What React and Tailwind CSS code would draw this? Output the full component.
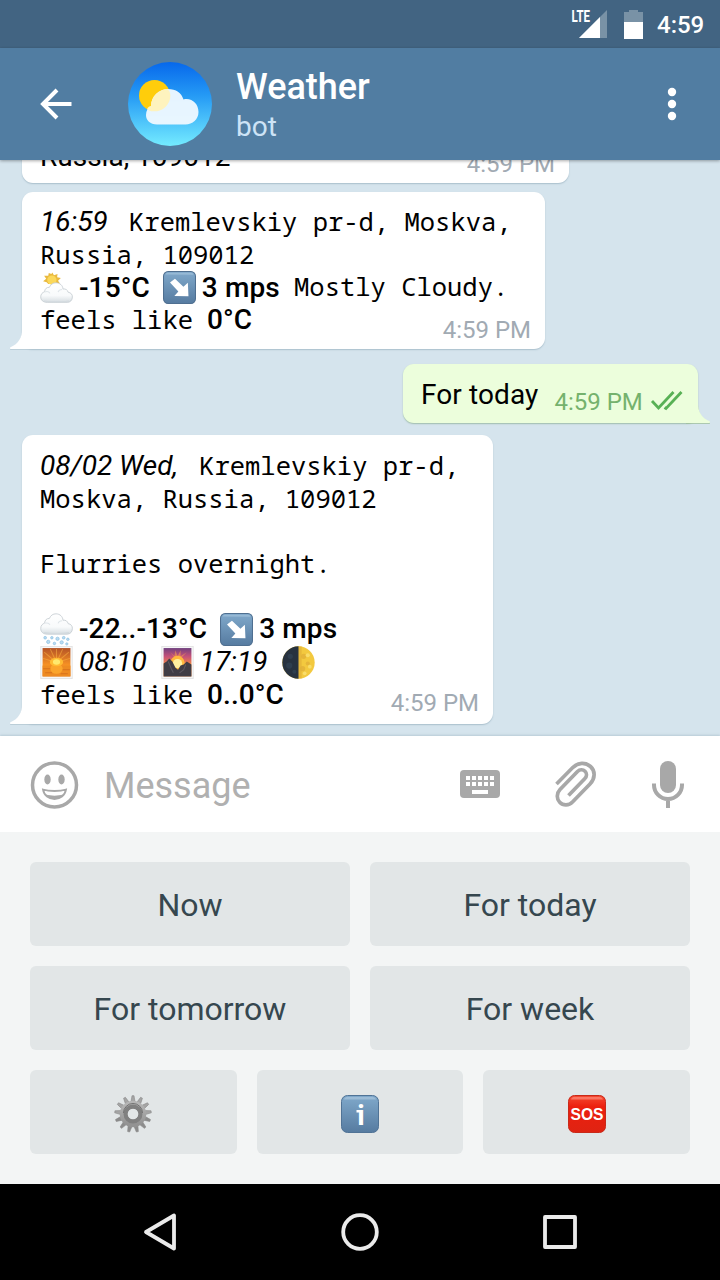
import React from "react";

const Mono = ({ children }) => (
  <span className="font-['Noto_Sans_Mono','DejaVu_Sans_Mono',monospace] text-[25.5px] tracking-[0px]">{children}</span>
);
const Line = ({ children }) => (
  <div className="flex h-[32.6px] items-baseline whitespace-pre leading-[32.6px]">{children}</div>
);
const EmojiLine = ({ children }) => (
  <div className="flex h-[32.6px] items-center whitespace-pre pt-[3px] leading-[32.6px]">{children}</div>
);
const B = ({ children }) => <span className="font-medium tracking-[0.1px]">{children}</span>;

const Emoji = ({ children }) => (
  <svg viewBox="0 0 32 32" className="mr-[6px] h-[33px] w-[33px] shrink-0 self-center">{children}</svg>
);

const Cloud = ({ y = 0 }) => (
  <g transform={`translate(0 ${y})`}>
    <path d="M7 27C2.800 27 .7 24.600.7 21.500c0-2.800 1.700-4.600 3.800-5.200 0-3 2.200-4.700 4.600-4.500 1.200-3 3.500-4.600 6.500-4.500 3.900.1 6.500 2.800 6.700 6.200 2.600-.4 4.500 1 5 3.300 2.700.4 4.200 2.300 4.100 4.800-.1 3.400-2.200 5.400-5 5.400z" fill="url(#cloudFill)" stroke="#c3cbd0" strokeWidth=".8" />
    <path d="M5 16.500c2-.9 4 0 4.600 1.500M21.500 14c-2 0-3.500 1-4 2.600" fill="none" stroke="#dfe5e9" strokeWidth="1" />
    <path d="M4 25.500c6 1.300 18 1.300 24 0" fill="none" stroke="#d3dadf" strokeWidth="1" />
  </g>
);

const SunCloud = () => (
  <Emoji>
    <path d="M12 1.500l1.500 2.500L17 3l-.4 3 3.600.9-2.700 2.500 2 3-3.900.2H8L6.500 11 3 10l3-2.400L4 4.500l4 .2L8.500 2l2.500 1z" fill="#e9b93f" />
    <circle cx="11.500" cy="8.800" r="4.500" fill="#fbd85a" />
    <g transform="translate(0 4) scale(1 .96)"><Cloud y={0.5} /></g>
  </Emoji>
);
const SnowCloud = () => (
  <Emoji>
    <Cloud y={-6.500} />
    <g fill="#b9dcf2" stroke="#8cbfe2" strokeWidth=".7">
      <circle cx="5" cy="24" r="1.300" /><circle cx="11.500" cy="24" r="1.200" /><circle cx="17" cy="25" r="1.600" />
      <circle cx="23" cy="24" r="1.300" /><circle cx="27" cy="25.500" r="1.200" /><circle cx="8" cy="28" r="1.600" />
      <circle cx="14" cy="29.500" r="1.200" /><circle cx="21" cy="28.500" r="1.600" /><circle cx="26" cy="30" r="1.100" />
    </g>
  </Emoji>
);
const ArrowTile = () => (
  <Emoji>
    <rect x=".5" y=".5" width="31" height="31" rx="4.500" fill="url(#blueTile)" stroke="#4f6f90" />
    <path d="M2.500 3.500C3 2 4 1.700 5 1.700h22c1.500 0 2.300.8 2.700 2z" fill="#b5d0e4" opacity=".45" />
    <path d="M6.800 11.200l4.800-3.600 8.200 7.700 4.300-3.900.6 13.200-13.700-.3 3.900-4.500z" fill="#fff" />
  </Emoji>
);
const Sunrise = () => (
  <Emoji>
    <rect x=".8" y=".3" width="30.400" height="31.400" fill="#f7f7f7" stroke="#dcdcdc" strokeWidth=".7" />
    <rect x="2.500" y="2" width="27" height="27.500" fill="url(#sunriseFill)" />
    <g stroke="#fdb845" strokeWidth="1" opacity=".5">
      <path d="M16 16L16 3M16 16L10 3M16 16L22 3M16 16L4 6M16 16L28 6M16 16L3 12M16 16L29 12" />
    </g>
    <rect x="2.500" y="19" width="27" height="10.500" fill="#ee8b22" />
    <path d="M3 22h8M20 23h9M5 26h7M20 27h7" stroke="#d8721d" strokeWidth="1" />
    <ellipse cx="16" cy="22" rx="6" ry="5" fill="#fba52c" />
    <ellipse cx="16" cy="15.500" rx="6.500" ry="4.200" fill="#ffbb32" />
    <ellipse cx="16" cy="15.500" rx="3.500" ry="2.600" fill="#ffe96e" />
  </Emoji>
);
const SunsetPeaks = () => (
  <Emoji>
    <rect x=".8" y=".3" width="30.400" height="31.400" fill="#f7f7f7" stroke="#dcdcdc" strokeWidth=".7" />
    <rect x="2.500" y="2" width="27" height="27.500" fill="url(#peaksFill)" />
    <path d="M16 15L9 6l4 4 1-6 2 6 3-6v6l6-4z" fill="#ffae45" opacity=".5" />
    <circle cx="16" cy="16.500" r="7" fill="#ffb83e" /><circle cx="16" cy="17" r="4.500" fill="#fff1a0" />
    <path d="M2.500 17l3-2 2.500-3 3 3 3 6 2.500 2 2.500-4 3-1 3-3 4.500 3v11.500h-27z" fill="#403d45" />
    <path d="M7 15l3 7 2 4M24 18l-2 5-4 3" stroke="#5d5961" fill="none" />
  </Emoji>
);
const Moon = () => (
  <Emoji>
    <circle cx="16" cy="16" r="15.700" fill="#f3c93f" />
    <path d="M15.500.3H19v31.200h-3.500z" fill="#dca936" opacity=".55" />
    <path d="M16 .3a15.700 15.700 0 0 0 0 31.400z" fill="#27323f" />
    <g fill="#e2b139" opacity=".8"><circle cx="21" cy="10" r="2.500" /><circle cx="25" cy="17" r="2" /><circle cx="20" cy="22" r="2.500" /></g>
    <g fill="#f9dd6a"><circle cx="25" cy="9" r="2" /><circle cx="27" cy="20" r="1.800" /><circle cx="22" cy="26.500" r="1.800" /></g>
    <g fill="#2e3e4e"><circle cx="8" cy="10" r="2.500" /><circle cx="7" cy="19" r="3" /><circle cx="12" cy="25" r="2" /></g>
  </Emoji>
);

const Tail = ({ right }) => (
  <svg viewBox="0 0 24 20" className={right ? "absolute -right-3 -bottom-px h-5 w-6 -scale-x-100" : "absolute -left-3 -bottom-px h-5 w-6"}>
    <path d="M12 0C12 7 8.500 14 .5 17.200c-1 .6-.6 1.800.6 1.800H24V0z" fill={right ? "#9fbf9c" : "#b3c6d1"} transform="translate(0 .8)" />
    <path d="M12 0C12 7 8.500 14 .5 17.200c-1 .6-.6 1.800.6 1.800H24V0z" fill={right ? "#ecfedc" : "#fff"} />
  </svg>
);
const bubble = "relative rounded-[11px] bg-white shadow-[0_1px_1.5px_#a9bfcc]";
const Time = () => <span className="absolute right-[14px] bottom-[5px] text-[24px] leading-7 text-[#a1aab3]">4:59 PM</span>;

const Key = ({ children }) => (
  <div className="flex h-[84px] flex-1 items-center justify-center rounded-[6px] bg-[#e2e6e7] text-[32px] leading-none text-[#36474f]">{children}</div>
);
const teeth = [0, 27.7, 55.4, 83.1, 110.8, 138.5, 166.2, 193.8, 221.5, 249.2, 276.9, 304.6, 332.3];

export default function App() {
  return (
    <div className="flex h-[1280px] w-[720px] flex-col overflow-hidden bg-[#d5e4ed] font-['Roboto',sans-serif] text-[28px] text-black">
      <svg className="absolute size-0">
        <defs>
          <linearGradient id="cloudFill" x2="0" y2="1"><stop stopColor="#fff" /><stop offset=".65" stopColor="#f8fafb" /><stop offset="1" stopColor="#d6dde1" /></linearGradient>
          <linearGradient id="blueTile" x2="0" y2="1"><stop stopColor="#80a9cb" /><stop offset="1" stopColor="#567ba0" /></linearGradient>
          <linearGradient id="redTile" x2="0" y2="1"><stop stopColor="#f54a32" /><stop offset=".3" stopColor="#ec200f" /><stop offset="1" stopColor="#df2312" /></linearGradient>
          <linearGradient id="sunriseFill" x2="0" y2="1"><stop stopColor="#b45326" /><stop offset=".6" stopColor="#f89224" /><stop offset="1" stopColor="#e37718" /></linearGradient>
          <linearGradient id="peaksFill" x2="0" y2="1"><stop stopColor="#70407f" /><stop offset=".3" stopColor="#c65178" /><stop offset=".6" stopColor="#f58b3e" /></linearGradient>
          <linearGradient id="sky" x2="0" y2="1"><stop stopColor="#0768eb" /><stop offset=".4" stopColor="#259af5" /><stop offset="1" stopColor="#74ebff" /></linearGradient>
          <linearGradient id="gear" x2="0" y2="1"><stop stopColor="#b5b5b5" /><stop offset="1" stopColor="#939393" /></linearGradient>
        </defs>
      </svg>

      <div className="flex h-12 shrink-0 items-center justify-end bg-[#426482] pr-4 text-white">
        <svg viewBox="0 0 86 48" className="mr-px h-12 w-[86px]">
          <text x="1.500" y="22.300" fontSize="16.500" fontWeight="700" textLength="18.500" lengthAdjust="spacingAndGlyphs" fill="#fff" fontFamily="Roboto">LTE</text>
          <path d="M37 10v28H9z" fill="#7992a6" />
          <path d="M30 17v21H9z" fill="#fff" />
          <path d="M59 10h9v2h5v10H54V12h5z" fill="#7992a6" />
          <path d="M54 22h19v17H54z" fill="#fff" />
        </svg>
        <span className="w-[47px] pt-px text-[24px] font-medium leading-none">4:59</span>
      </div>

      <header className="z-10 flex h-28 shrink-0 items-center bg-[#517da2] text-white shadow-[0_1px_3px_#00000055]">
        <svg viewBox="0 0 128 112" className="h-28 w-32 shrink-0" fill="none" stroke="#fff" strokeWidth="4">
          <path d="M71.500 56H43" /><path d="M57 42L43 56l14 14" strokeLinejoin="miter" strokeLinecap="butt" />
        </svg>
        <svg viewBox="0 0 84 84" className="size-[84px] shrink-0">
          <circle cx="42" cy="42" r="42" fill="url(#sky)" />
          <circle cx="26.500" cy="33.500" r="15.500" fill="#ffcd0b" />
          <path d="M29 62.500c-7 0-11-4.300-11-9.500 0-4.500 2-7.500 5-9 0-10 8-17 17-17 8 0 13.500 4 15.500 10.500 8-2 15 4 15 12.500 0 7.500-6 12.500-13 12.500z" fill="#eef8ff" opacity=".96" />
          <path d="M19 47c1-2 2.500-3 4-3 0-10 8-16 16-17 3 2 4 5 3 10-2 8-9 13-17 12.300-2.500 0-4.500-.8-6-2.300z" fill="#fff3b8" opacity=".9" />
        </svg>
        <div className="flex flex-1 flex-col pt-[3px] pl-6">
          <span className="text-[36px] font-medium leading-[42px]">Weather</span>
          <span className="mt-[1px] text-[28px] leading-[36px] text-[#cde3f6]">bot</span>
        </div>
        <svg viewBox="0 0 96 112" className="h-28 w-24" fill="#fff"><circle cx="48" cy="44" r="4.200" /><circle cx="48" cy="56" r="4.200" /><circle cx="48" cy="68" r="4.200" /></svg>
      </header>

      <main className="flex h-[576px] shrink-0 flex-col items-start justify-end overflow-hidden px-[22px] pb-3">
        <div className={`${bubble} mb-[9px] h-[60px] w-[547px] shrink-0 px-[18px] pt-[18px]`}>
          <Line>Russia, 109012</Line><Time />
        </div>
        <div className={`${bubble} mb-[15px] h-[157px] w-[523px] shrink-0 px-[18px] pt-[13px]`}>
          <Tail />
          <Line><i>16:59</i><span className="w-[6px]" /><Mono> Kremlevskiy pr-d, Moskva,</Mono></Line>
          <Line><Mono>Russia, 109012</Mono></Line>
          <EmojiLine><SunCloud /><B>-15°C</B><span className="w-[13px]" /><ArrowTile /><B>3 mps</B><span className="-ml-px pb-[2px]"><Mono> Mostly Cloudy.</Mono></span></EmojiLine>
          <Line><Mono>feels like</Mono><span className="w-[14px]" /><B>0°C</B></Line>
          <Time />
        </div>
        <div className="relative mb-3 flex h-[59px] w-[295px] shrink-0 self-end rounded-[11px] bg-[#ecfedc] pl-[18px] shadow-[0_1px_1.5px_#9fbcac]">
          <Tail right />
          <span className="pt-[14px] leading-[33px] tracking-[0.1px]">For today</span>
          <span className="relative pt-[24px] pl-[16px] text-[24px] leading-7 text-[#75b26d]">4:59 PM</span>
          <svg viewBox="0 0 34 22" className="relative mt-[26px] ml-[7px] h-[22px] w-[34px]" fill="none" stroke="#58b155" strokeWidth="2.800"><path d="M2 11l6.500 7L23.500 2M14.500 17.500l1.500 1L31.500 2" /></svg>
        </div>
        <div className={`${bubble} h-[289px] w-[471px] shrink-0 px-[18px] pt-[14px]`}>
          <Tail />
          <Line><i>08/02 Wed,</i><span className="w-[6px]" /><Mono> Kremlevskiy pr-d,</Mono></Line>
          <Line><Mono>Moskva, Russia, 109012</Mono></Line>
          <Line />
          <Line><Mono>Flurries overnight.</Mono></Line>
          <Line />
          <EmojiLine><SnowCloud /><B>-22..-13°C</B><span className="w-[13px]" /><ArrowTile /><B>3 mps</B></EmojiLine>
          <EmojiLine><Sunrise /><i>08:10</i><span className="w-[14px]" /><SunsetPeaks /><i>17:19</i><span className="w-[14px]" /><Moon /></EmojiLine>
          <div className="pt-px"><Line><Mono>feels like</Mono><span className="w-[14px]" /><B>0..0°C</B></Line></div>
          <span className="absolute right-[14px] bottom-[7px] text-[24px] leading-7 text-[#a1aab3]">4:59 PM</span>
        </div>
      </main>

      <div className="flex h-24 shrink-0 items-center bg-white text-[#a8a8a8] shadow-[0_-1px_2px_#9db4c288]">
        <svg viewBox="0 0 104 96" className="h-24 w-[104px] shrink-0">
          <circle cx="54.500" cy="49" r="22" fill="none" stroke="#a8a8a8" strokeWidth="3.500" />
          <ellipse cx="47.500" cy="43.500" rx="3.200" ry="5" fill="#a8a8a8" /><ellipse cx="61.500" cy="43.500" rx="3.200" ry="5" fill="#a8a8a8" />
          <path d="M43 53.500c6 2 17 2 23 0-1 6-6 9.500-11.500 9.500S44 59.500 43 53.500z" fill="#fff" stroke="#a8a8a8" strokeWidth="1.800" />
          <path d="M46 58.500c5 1.500 12 1.500 17 0-2 3-5 4.500-8.500 4.500s-6.500-1.500-8.500-4.500z" fill="#a8a8a8" />
        </svg>
        <span className="flex-1 pt-1 text-[36px] leading-[42px] text-[#b0b0b0]">Message</span>
        <svg viewBox="0 0 96 96" className="size-24" fill="#a8a8a8">
          <rect x="28" y="34" width="40" height="28" rx="4" />
          <path d="M34 42h28M34 48h28" stroke="#fff" strokeWidth="4" strokeDasharray="4 2" />
          <path d="M40 54h16v4H40z" fill="#fff" />
        </svg>
        <svg viewBox="0 0 96 96" className="size-24" fill="none" stroke="#a8a8a8" strokeWidth="3.700">
          <path d="M28.500 48L45 31.300C50 26.500 57.500 26 62.500 30.500s4.800 12-.5 17.500L44.500 66c-3.500 3.700-9.500 3.700-12.800.2s-3.200-9 .3-12.700L49.500 35.500c2.300-2.300 5.500-2.300 7.500-.3s2 5.200-.3 7.500L40.500 59.500" />
        </svg>
        <svg viewBox="0 0 96 96" className="h-24 w-24" fill="none" stroke="#a8a8a8" strokeWidth="4">
          <rect x="36" y="25" width="16" height="32" rx="8" fill="#a8a8a8" stroke="none" />
          <path d="M30 47.500v1.500a14 14 0 0 0 28 0v-1.500M44 63v9" />
        </svg>
      </div>

      <div className="flex h-[352px] shrink-0 flex-col gap-5 bg-[#f3f5f5] p-[30px]">
        <div className="flex gap-5"><Key><span className="pt-0.5">Now</span></Key><Key><span className="pt-0.5">For today</span></Key></div>
        <div className="flex gap-5"><Key><span className="pt-0.5">For tomorrow</span></Key><Key><span className="pt-0.5">For week</span></Key></div>
        <div className="flex gap-5">
          <Key>
            <svg viewBox="0 0 38 38" className="mt-1 size-[38px]">
              {teeth.map((a) => <path key={a} d="M16.800 8l1.200-7.300h2L21.200 8z" fill={a > 90 && a < 270 ? "#8c8c8c" : "#a5a5a5"} stroke="#8a8a8a" strokeWidth=".6" transform={`rotate(${a} 19 19)`} />)}
              <circle cx="19" cy="19" r="10" fill="none" stroke="url(#gear)" strokeWidth="6.500" />
              <circle cx="19" cy="19" r="7.300" fill="none" stroke="#808080" strokeWidth="4.400" />
              <path d="M9.500 18a9.500 9.500 0 0 1 19 0" fill="none" stroke="#707070" strokeWidth="1" />
              <circle cx="19" cy="19" r="5.300" fill="#e2e6e7" />
            </svg>
          </Key>
          <Key>
            <svg viewBox="0 0 38 38" className="mt-1 size-[38px]">
              <rect x=".5" y=".5" width="37" height="37" rx="6" fill="url(#blueTile)" stroke="#507396" />
              <path d="M3 4.500C3.500 2.500 5 2 6.500 2h25c2 0 3 1 3.500 2.500z" fill="#b9d2e5" opacity=".5" />
              <text x="20" y="30" textAnchor="middle" fontFamily="Roboto" fontWeight="700" fontSize="28" fill="#fff">i</text>
              <rect x="15.500" y="15" width="4" height="2.500" fill="#fff" />
            </svg>
          </Key>
          <Key>
            <svg viewBox="0 0 38 38" className="mt-1 size-[38px]">
              <rect x=".5" y=".5" width="37" height="37" rx="6" fill="url(#redTile)" stroke="#c82a1a" />
              <path d="M3 4.500C3.500 2.500 5 2 6.500 2h25c2 0 3 1 3.500 2.500z" fill="#ff9a88" opacity=".6" />
              <text x="19" y="24.700" textAnchor="middle" fontFamily="Liberation Sans" fontWeight="700" fontSize="16" textLength="33" lengthAdjust="spacingAndGlyphs" fill="#fff">SOS</text>
            </svg>
          </Key>
        </div>
      </div>

      <nav className="flex h-24 shrink-0 items-center justify-center bg-black">
        <svg viewBox="0 0 480 96" className="h-24 w-[480px]" fill="none" stroke="#ebebeb" strokeWidth="3.800" strokeLinejoin="round">
          <path d="M54 31.500v33L26 48z" /><circle cx="240" cy="48" r="16.800" /><rect x="425" y="33" width="30" height="30" />
        </svg>
      </nav>
    </div>
  );
}
